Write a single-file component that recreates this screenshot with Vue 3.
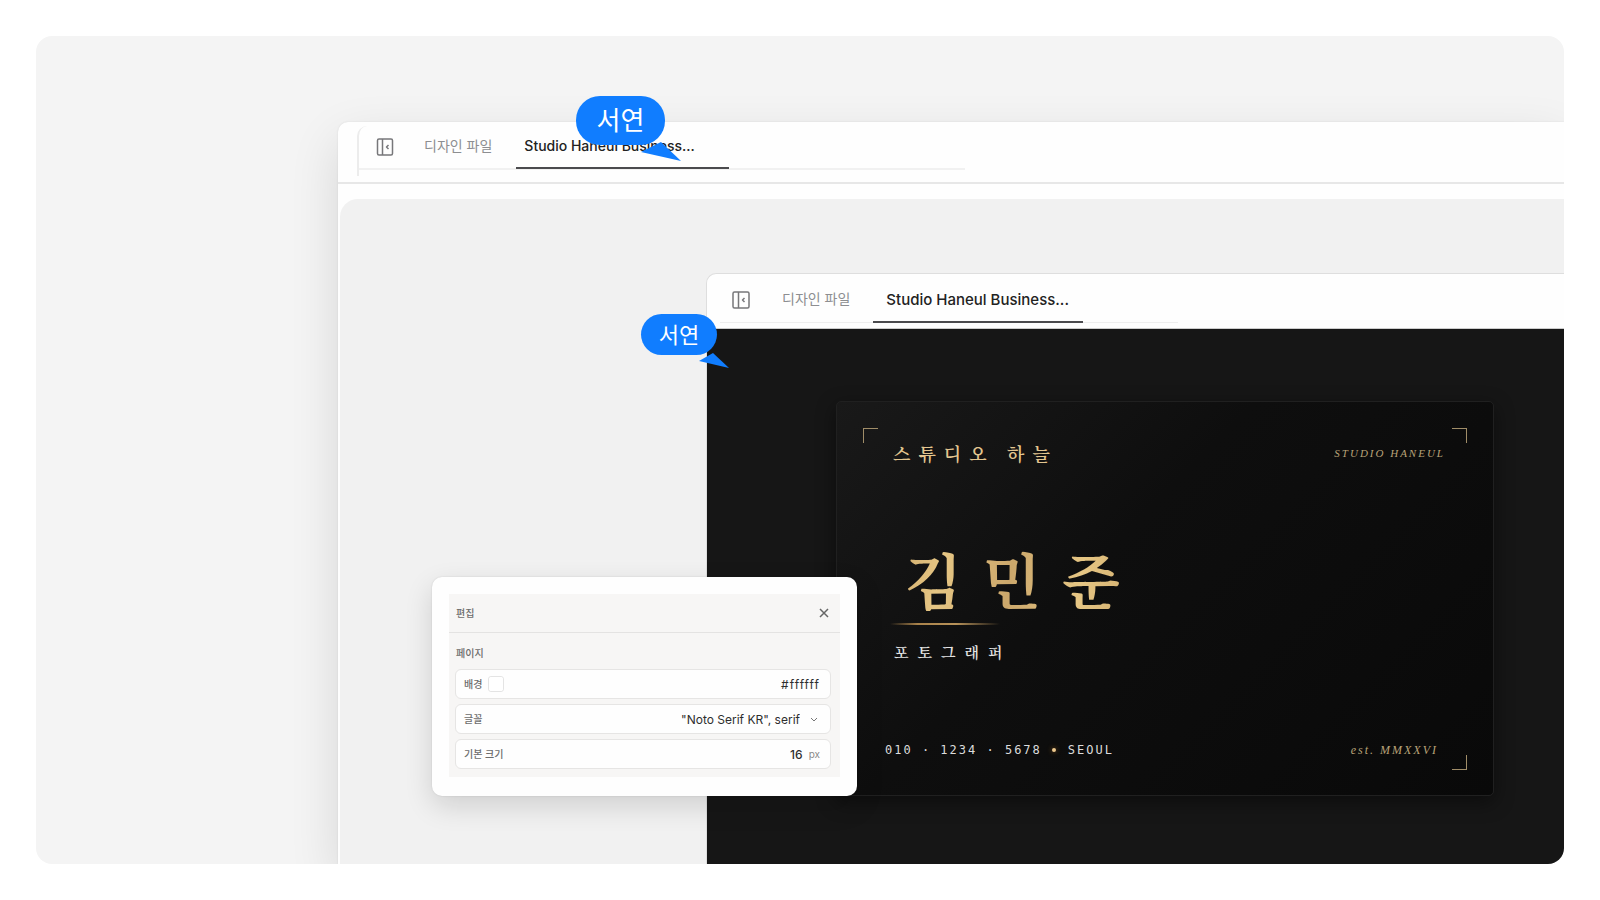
<script setup>
import { ref } from 'vue'

const background = ref('#ffffff')
const font = ref('"Noto Serif KR", serif')
const size = ref('16')
</script>

<template>
  <main class="stage">
    <section class="window outer">
      <header class="outer-head">
        <div class="tabs tabs-outer">
          <button class="toggle" type="button" aria-label="사이드바 접기">
            <svg viewBox="0 0 18 18" width="18" height="18" aria-hidden="true">
              <rect x="1.5" y="1" width="15" height="16" rx="1.5" />
              <path d="M6.5 1v16M12.5 7l-2 2 2 2" />
            </svg>
          </button>
          <button class="tab" type="button">디자인 파일</button>
          <button class="tab active" type="button">Studio Haneul Business...</button>
        </div>
      </header>

      <div class="canvas">
        <section class="window inner">
          <header class="inner-head">
            <div class="tabs tabs-inner">
              <button class="toggle" type="button" aria-label="사이드바 접기">
                <svg viewBox="0 0 18 18" width="18" height="18" aria-hidden="true">
                  <rect x="1" y="1" width="16" height="16" rx="1.5" />
                  <path d="M6.5 1v16M12.5 7l-2 2 2 2" />
                </svg>
              </button>
              <button class="tab" type="button">디자인 파일</button>
              <button class="tab active" type="button">Studio Haneul Business...</button>
            </div>
          </header>
          <div class="board">
            <article class="card">
              <i class="corner tl"></i>
              <i class="corner tr"></i>
              <i class="corner br"></i>
              <div class="card-top">
                <span class="studio">스튜디오 하늘</span>
                <em class="latin">STUDIO HANEUL</em>
              </div>
              <div class="person">
                <h1>김민준</h1>
                <div class="rule"></div>
                <p>포토그래퍼</p>
              </div>
              <div class="card-bottom">
                <span class="contact">010 · 1234 · 5678<b class="dot"></b>SEOUL</span>
                <em class="est">est. MMXXVI</em>
              </div>
            </article>
          </div>
        </section>
      </div>
    </section>

    <form class="panel" @submit.prevent>
      <div class="panel-body">
        <div class="panel-head">
          <h2>편집</h2>
          <button type="button" class="close" aria-label="닫기">
            <svg viewBox="0 0 12 12" width="12" height="12" aria-hidden="true"><path d="M2 2l8 8M10 2l-8 8" /></svg>
          </button>
        </div>
        <div class="panel-fields">
          <h3>페이지</h3>
          <div class="field">
            <label for="bg">배경</label>
            <input class="swatch" type="color" v-model="background" aria-label="배경 색상" />
            <input id="bg" class="value hex" type="text" v-model="background" />
          </div>
          <div class="field">
            <label for="font">글꼴</label>
            <select id="font" class="value" v-model="font">
              <option>"Noto Serif KR", serif</option>
            </select>
            <svg class="chevron" viewBox="0 0 8 8" width="8" height="8" aria-hidden="true"><path d="M1 3l3 3L7 3" /></svg>
          </div>
          <div class="field">
            <label for="size">기본 크기</label>
            <input id="size" class="value strong" type="text" v-model="size" />
            <span class="unit">px</span>
          </div>
        </div>
      </div>
    </form>

    <div class="cursor big">
      <span>서연</span>
      <svg viewBox="0 0 40 20" width="40" height="20" aria-hidden="true"><path d="M0 10L20 0L40 19Z" /></svg>
    </div>
    <div class="cursor small">
      <span>서연</span>
      <svg viewBox="0 0 30 16" width="30" height="16" aria-hidden="true"><path d="M0 8L14 0L30 15Z" /></svg>
    </div>
  </main>
</template>

<style>
body {
  margin: 0;
  background: #fff;
}
</style>

<style scoped>
* {
  box-sizing: border-box;
}

button,
input,
select {
  margin: 0;
  padding: 0;
  border: 0;
  background: none;
  font: inherit;
  color: inherit;
}

h1,
h2,
h3,
p {
  margin: 0;
  font-weight: 400;
}

.stage {
  position: relative;
  display: flex;
  min-height: calc(100vh - 72px);
  margin: 36px;
  overflow: hidden;
  border-radius: 16px;
  background: #f4f4f4;
  font-family: Inter, "Noto Sans CJK KR", sans-serif;
}

.window {
  display: flex;
  flex-direction: column;
  flex: 1;
  min-width: 0;
}

.outer {
  margin: 86px 0 0 302px;
  border-radius: 10px 0 0 0;
  background: #fefefe;
  box-shadow: 0 18px 50px rgba(0, 0, 0, 0.12), 0 0 2px rgba(0, 0, 0, 0.1);
}

.outer-head {
  height: 62px;
  padding: 4px 0 0 19px;
  border-bottom: 2px solid #e7e7e7;
}

.tabs {
  position: relative;
  display: flex;
  align-items: stretch;
}

.tabs-outer {
  width: 608px;
  height: 44px;
  padding-left: 19px;
  border-bottom: 2px solid #f1f1f1;
}

.tabs-outer::before {
  content: "";
  position: absolute;
  left: 0;
  top: 0;
  width: 10px;
  height: 50px;
  border-left: 2px solid #ececec;
  border-radius: 10px 0 0 0;
}

.toggle {
  display: flex;
  align-items: center;
  width: 18px;
}

.toggle svg {
  fill: none;
  stroke: #77777a;
  stroke-width: 1.5;
  stroke-linejoin: round;
}

.tab {
  padding-bottom: 4px;
  color: #8d8e91;
  font-size: 14px;
  white-space: nowrap;
}

.active {
  display: flex;
  align-items: center;
  padding-bottom: 2px;
  color: #222;
  font-weight: 500;
  border-bottom: 2px solid #4b4b4e;
}

.tabs-outer .tab {
  margin-left: 30px;
}

.tabs-outer .active {
  width: 213px;
  margin: 0 0 -1px 24px;
  padding-left: 8px;
}

.canvas {
  display: flex;
  flex: 1;
  margin: 15px 0 0 2px;
  padding: 74px 0 0 366px;
  border-radius: 18px 0 0 0;
  background: #f1f1f1;
}

.inner {
  border: 1px solid #dedede;
  border-width: 1px 0 0 1px;
  border-radius: 10px 0 0 0;
  background: #fefefe;
}

.inner-head {
  height: 55px;
  padding-left: 13px;
  border-bottom: 1px solid #ccc;
}

.tabs-inner {
  width: 458px;
  height: 49px;
  padding: 4px 0 0 12px;
  border-bottom: 1px solid #eee;
}

.tabs-inner .tab {
  margin-left: 32px;
}

.tabs-inner .active {
  width: 210px;
  margin: 0 0 -1px 23px;
  padding-bottom: 0;
  padding-left: 13px;
  font-size: 15px;
}

.board {
  flex: 1;
  padding: 72px 70px 68px 129px;
  background: #161616;
}

.card {
  position: relative;
  display: flex;
  flex-direction: column;
  justify-content: space-between;
  height: 395px;
  padding: 35px 48px 32px;
  border: 1px solid #202020;
  border-radius: 5px;
  background: linear-gradient(135deg, #191919 0%, #0e0e0e 40%, #090909 100%);
  box-shadow: 0 6px 20px rgba(0, 0, 0, 0.45);
}

.corner {
  position: absolute;
  width: 15px;
  height: 15px;
  border: 0 solid #a08d68;
}

.tl {
  top: 26px;
  left: 26px;
  border-width: 1px 0 0 1px;
}

.tr {
  top: 26px;
  right: 26px;
  border-width: 1px 1px 0 0;
}

.br {
  right: 26px;
  bottom: 25px;
  border-width: 0 1px 1px 0;
}

.card-top,
.card-bottom {
  display: flex;
  align-items: center;
  justify-content: space-between;
}

.studio,
.person {
  font-family: "Noto Serif CJK KR", "Noto Serif KR", "Noto Sans CJK KR", serif;
}

.studio {
  margin-left: 8px;
  color: #e3c690;
  font-size: 18px;
  font-weight: 600;
  line-height: 32px;
  letter-spacing: 8px;
}

.latin,
.est {
  color: #b9a378;
  font-family: "Liberation Serif", serif;
  font-size: 12px;
  letter-spacing: 2px;
}

.latin {
  font-size: 11px;
}

.est {
  padding-right: 7px;
}

.person {
  padding-bottom: 4px;
}

h1 {
  padding-left: 19px;
  background: linear-gradient(100deg, #c9a466 0, #e6c684 60px, #cba76b 130px, #e6c684 200px, #c9a466 280px);
  -webkit-background-clip: text;
  background-clip: text;
  color: transparent;
  font-size: 60px;
  font-weight: 700;
  line-height: 80px;
  letter-spacing: 21px;
}

.rule {
  width: 110px;
  height: 2px;
  margin: 5px 0 14px 5px;
  background: linear-gradient(90deg, transparent, #a9824a 25%, #b8935a 60%, transparent);
}

.person p {
  padding-left: 9px;
  color: #e4e4e4;
  font-size: 15px;
  font-weight: 600;
  line-height: 26px;
  letter-spacing: 9px;
}

.contact {
  display: flex;
  align-items: center;
  color: #dcdcdc;
  font-family: "DejaVu Sans Mono", monospace;
  font-size: 12px;
  line-height: 26px;
  letter-spacing: 2px;
}

.dot {
  width: 4px;
  height: 4px;
  margin: 0 12px 0 10px;
  border-radius: 50%;
  background: #edc98e;
  box-shadow: 0 0 5px #8a5a1c;
}

.panel {
  position: absolute;
  left: 396px;
  top: 541px;
  width: 425px;
  padding: 17px 17px 19px;
  border-radius: 10px;
  background: #fefefe;
  box-shadow: 0 10px 28px rgba(0, 0, 0, 0.14), 0 0 2px rgba(0, 0, 0, 0.12);
  color: #6c6c6c;
  font-size: 12px;
}

.panel-body {
  background: #f7f6f5;
}

.panel-head {
  display: flex;
  align-items: center;
  justify-content: space-between;
  height: 39px;
  padding: 0 10px 0 7px;
  border-bottom: 1px solid #e4e3e2;
}

h2,
h3 {
  font-size: 10px;
  font-weight: 500;
}

h2,
.field label {
  padding-bottom: 2px;
}

.close {
  display: flex;
}

.close svg {
  fill: none;
  stroke: #666;
  stroke-width: 1.5;
}

.panel-fields {
  display: flex;
  flex-direction: column;
  gap: 5px;
  padding: 12px 9px 8px 6px;
}

h3 {
  height: 19px;
  padding-left: 1px;
  line-height: 16px;
}

.field {
  display: flex;
  align-items: center;
  height: 30px;
  padding: 0 10px 0 8px;
  border: 1px solid #e6e5e4;
  border-radius: 6px;
  background: #fefefe;
}

.field label {
  flex: none;
  font-size: 10px;
  font-weight: 500;
}

.swatch {
  flex: none;
  width: 16px;
  height: 16px;
  margin-left: 6px;
  border: 1px solid #e4e4e4;
  border-radius: 3px;
  appearance: none;
}

.swatch::-webkit-color-swatch-wrapper {
  padding: 0;
}

.swatch::-webkit-color-swatch {
  border: 0;
  border-radius: 2px;
}

.value {
  flex: 1;
  min-width: 0;
  color: #2e2e2e;
  text-align: right;
  text-align-last: right;
  appearance: none;
}

.hex {
  letter-spacing: 1px;
}

.strong {
  font-weight: 500;
}

.chevron {
  margin: 0 2px 0 10px;
  fill: none;
  stroke: #777;
}

.unit {
  margin-left: 6px;
  color: #8a8a8a;
  font-size: 10px;
}

.cursor {
  position: absolute;
  color: #fff;
  font-weight: 400;
}

.cursor span {
  display: flex;
  align-items: center;
  justify-content: center;
  padding-bottom: 4px;
  border-radius: 24px;
  background: #107dff;
}

.cursor svg {
  position: absolute;
  fill: #107dff;
}

.big {
  left: 540px;
  top: 60px;
  font-size: 26px;
}

.big span {
  width: 89px;
  height: 49px;
}

.big svg {
  left: 65px;
  top: 46px;
}

.small {
  left: 605px;
  top: 278px;
  font-size: 22px;
}

.small span {
  width: 76px;
  height: 41px;
}

.small svg {
  left: 58px;
  top: 39px;
}
</style>
